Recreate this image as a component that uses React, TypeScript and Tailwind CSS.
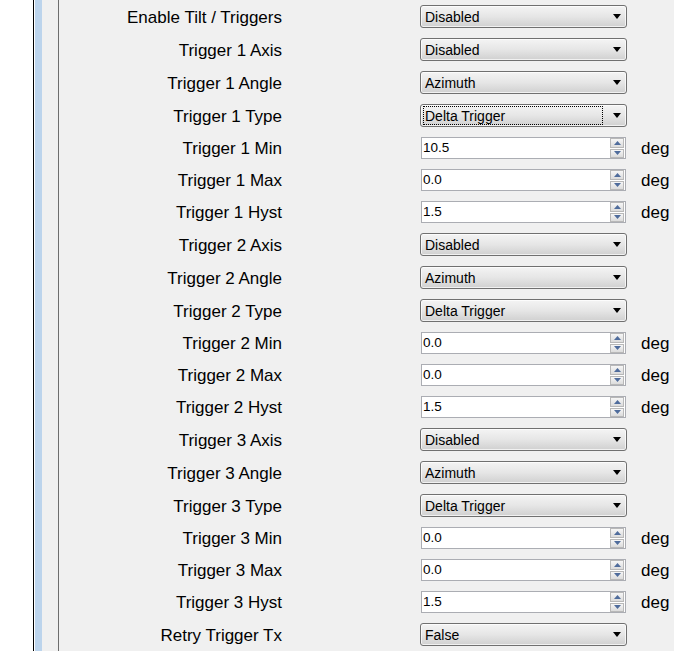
type Row = {
    label: string;
    kind: 'combo' | 'num';
    value: string;
    focused?: boolean;
};

const triggerBlock = (n: number, min: string, focused = false): Row[] => [
    { label: `Trigger ${n} Axis`, kind: 'combo', value: 'Disabled' },
    { label: `Trigger ${n} Angle`, kind: 'combo', value: 'Azimuth' },
    { label: `Trigger ${n} Type`, kind: 'combo', value: 'Delta Trigger', focused },
    { label: `Trigger ${n} Min`, kind: 'num', value: min },
    { label: `Trigger ${n} Max`, kind: 'num', value: '0.0' },
    { label: `Trigger ${n} Hyst`, kind: 'num', value: '1.5' },
];

const rows: Row[] = [
    { label: 'Enable Tilt / Triggers', kind: 'combo', value: 'Disabled' },
    ...triggerBlock(1, '10.5', true),
    ...triggerBlock(2, '0.0'),
    ...triggerBlock(3, '0.0'),
    { label: 'Retry Trigger Tx', kind: 'combo', value: 'False' },
];

function Combo({ value, focused }: { value: string; focused?: boolean }) {
    return (
        <div className="ml-[138px] w-[207px] h-[23px] rounded-[3px] border border-[#707070] bg-gradient-to-b from-[#f4f4f4] via-[#e6e6e6] to-[#d0d0d0] shadow-[inset_0_0_0_1px_rgba(255,255,255,0.7)] flex items-center pl-[2px] pr-[5px]">
            <div
                className={
                    'flex-1 h-[19px] flex items-center pl-[1px] pt-px text-[14px] text-black mr-[10px] border ' +
                    (focused ? 'border-dotted border-black' : 'border-transparent')
                }
            >
                {value}
            </div>
            <svg width="8" height="5" viewBox="0 0 8 5" className="shrink-0">
                <path d="M0 0 H8 L4 5 Z" fill="#000" />
            </svg>
        </div>
    );
}

function NumField({ value }: { value: string }) {
    return (
        <div className="flex items-center">
            <div className="ml-[139px] w-[205px] h-[22px] border border-[#abadb3] bg-white flex items-center">
                <span className="flex-1 pl-[1px] pt-px text-[13.5px] text-black">{value}</span>
                <div className="w-[15px] h-[20px] flex flex-col gap-px pr-[1px]">
                    <div className="flex-1 border border-[#b8b8b8] bg-gradient-to-b from-[#f6f6f6] to-[#dcdcdc] flex items-center justify-center">
                        <svg width="7" height="4" viewBox="0 0 7 4">
                            <path d="M0 4 L3.5 0 L7 4 Z" fill="#4f6c9c" />
                        </svg>
                    </div>
                    <div className="flex-1 border border-[#b8b8b8] bg-gradient-to-b from-[#f6f6f6] to-[#dcdcdc] flex items-center justify-center">
                        <svg width="7" height="4" viewBox="0 0 7 4">
                            <path d="M0 0 L7 0 L3.5 4 Z" fill="#4f6c9c" />
                        </svg>
                    </div>
                </div>
            </div>
            <span className="ml-[15px] pt-px text-[17px] text-black">deg</span>
        </div>
    );
}

export default function App() {
    return (
        <div className="flex w-[674px] h-[651px] overflow-hidden bg-white" style={{ fontFamily: '"Liberation Sans", Arial, sans-serif' }}>
            <div className="w-[33px] bg-white" />
            <div className="w-px bg-black" />
            <div className="w-px bg-white" />
            <div className="w-[7px] bg-[#bcd4ec]" />
            <div className="w-[16px] bg-[#f0f0f0]" />
            <div className="w-px bg-[#6d6d6d]" />
            <div className="flex-1 bg-[#f0f0f0] flex flex-col">
                {rows.map((row, i) => (
                    <div key={i} className={'flex items-center ' + (row.kind === 'combo' ? 'h-[33px]' : 'h-[32px]')}>
                        <div className="w-[223px] pt-[2px] text-right text-[17px] text-black whitespace-nowrap">{row.label}</div>
                        {row.kind === 'combo' ? <Combo value={row.value} focused={row.focused} /> : <NumField value={row.value} />}
                    </div>
                ))}
            </div>
        </div>
    );
}
